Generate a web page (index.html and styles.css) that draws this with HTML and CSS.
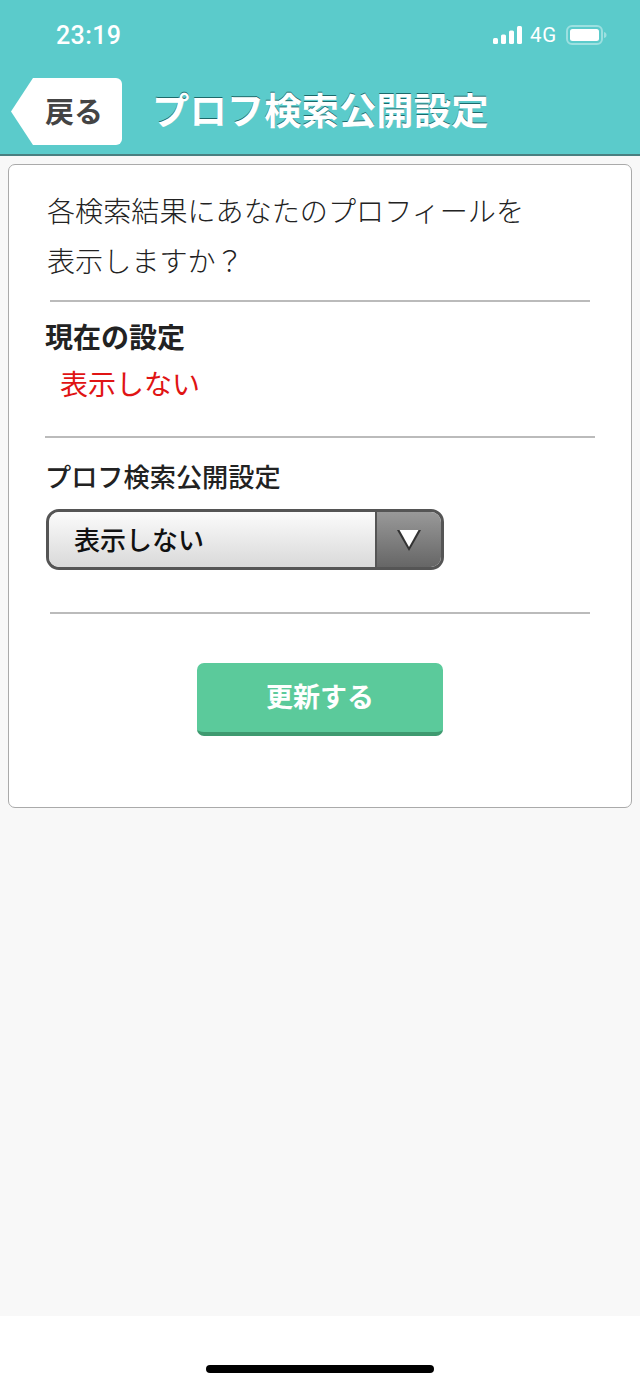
FILE: index.html
```html
<!DOCTYPE html>
<html lang="ja">

<head>
    <meta charset="UTF-8" />
    <meta name="viewport" content="width=device-width, initial-scale=1.0" />
    <title>プロフ検索公開設定</title>

    <link rel="stylesheet" href="styles.css">
</head>

<body>
    <div class="container">
        <div class="top">
            <div class="status-bar">
                <span class="time">23:19</span>
                <div class="status-icons">
                    <svg class="signal" width="29" height="18" viewBox="0 0 29 18">
                        <rect x="0" y="12" width="5" height="6" rx="1.5" />
                        <rect x="8" y="8.5" width="5" height="9.5" rx="1.5" />
                        <rect x="16" y="4.5" width="5" height="13.5" rx="1.5" />
                        <rect x="24" y="0" width="5" height="18" rx="1.5" />
                    </svg>
                    <span class="network">4G</span>
                    <svg class="battery" width="41" height="20" viewBox="0 0 41 20">
                        <rect x="1" y="1" width="35" height="18" rx="5" fill="none" stroke="#fff" stroke-opacity="0.4" stroke-width="2" />
                        <rect x="4" y="4" width="29" height="12" rx="2.5" fill="#fff" />
                        <path d="M38 7 C40 7.5 40.5 8.5 40.5 10 C40.5 11.5 40 12.500 38 13 Z" fill="#fff" fill-opacity="0.4" />
                    </svg>
                </div>
            </div>
            <header>
                <a class="button-back" href="">戻る</a>
                <h1>プロフ検索公開設定</h1>
            </header>
        </div>

        <main>
            <div class="card">
                <p class="intro">各検索結果にあなたのプロフィールを<br>表示しますか？</p>
                <hr class="line line-first">
                <h2 class="current-title">現在の設定</h2>
                <p class="current-value">表示しない</p>
                <hr class="line line-wide">
                <label class="select-label" for="visible">プロフ検索公開設定</label>
                <div class="select-box" id="visible">
                    <span class="select-text">表示しない</span>
                    <span class="select-arrow">
                        <svg width="26" height="24" viewBox="0 0 26 24">
                            <path d="M1 2 H25 L13 23 Z" fill="#333" />
                            <path d="M3.500 2 H22.500 L13 19 Z" fill="#fff" />
                        </svg>
                    </span>
                </div>
                <hr class="line line-last">
                <div class="button-wrapper">
                    <button class="button-update" type="button">更新する</button>
                </div>
            </div>
        </main>

        <footer>
            <div class="home-bar"></div>
        </footer>
    </div>
</body>

</html>
```

FILE: styles.css
```css
:root {
    --bg-top: #5bcbcb;
    --bg-page: #f8f8f8;
    --line: #bbbbbb;
    --text: #222222;
    --green: #5bca9b;
    --green-dark: #3f9a70;
}

body {
    margin: 0;
    font-family: "Noto Sans CJK JP", "Noto Sans", sans-serif;
    color: var(--text);
    background-color: #ffffff;
}

.container {
    display: flex;
    flex-direction: column;
    height: 1385px;
}

.top {
    background-color: var(--bg-top);
    border-bottom: 2px solid #4a7f80;
}

.status-bar {
    display: flex;
    justify-content: space-between;
    align-items: center;
    height: 70px;
    padding: 0 33px 0 56px;
    color: #ffffff;
}

.time {
    font-family: Roboto, sans-serif;
    font-size: 25px;
    font-weight: 500;
    letter-spacing: 0.4px;
}

.status-icons {
    display: flex;
    align-items: center;
    gap: 9px;
}

.signal {
    fill: #ffffff;
}

.network {
    font-family: Roboto, sans-serif;
    font-size: 20.500px;
    letter-spacing: 0.8px;
    margin-left: -1px;
}

header {
    display: flex;
    align-items: flex-start;
    height: 84px;
    padding-top: 8px;
    padding-left: 11px;
    box-sizing: border-box;

    h1 {
        margin: 0 0 0 30px;
        color: #ffffff;
        font-size: 37.4px;
        font-weight: 700;
        line-height: 63px;
        white-space: nowrap;
        text-shadow: 0 -1px 0 #1d6a6b;
    }
}

.button-back {
    display: block;
    width: 111px;
    height: 67px;
    line-height: 65px;
    padding-left: 34px;
    box-sizing: border-box;
    background-color: #ffffff;
    color: #444444;
    font-size: 29px;
    font-weight: 700;
    text-decoration: none;
    border-radius: 0 6px 6px 0;
    clip-path: polygon(22px 0, 100% 0, 100% 100%, 22px 100%, 0 50%);
}

main {
    flex: 1;
    background-color: var(--bg-page);
    padding: 8px 8px 0;
}

.card {
    height: 644px;
    box-sizing: border-box;
    background-color: #ffffff;
    border: 1px solid #aaaaaa;
    border-radius: 7px;
    padding: 20px 36px 0;
}

.intro {
    margin: 0 0 0 2px;
    font-size: 28.1px;
    font-weight: 300;
    line-height: 50px;
    color: #222222;
}

.line {
    border: none;
    border-top: 2px solid var(--line);
    margin: 0;
}

.line-first {
    margin: 15px 5px 0;
}

.current-title {
    margin: 16px 0 0;
    font-size: 28px;
    font-weight: 700;
    line-height: 36px;
}

.current-value {
    margin: 11px 0 0 15px;
    font-size: 28px;
    line-height: 36px;
    color: #e01414;
}

.line-wide {
    margin: 35px 0 0;
}

.select-label {
    display: block;
    margin: 20px 0 0;
    font-size: 26.2px;
    font-weight: 500;
    line-height: 36px;
}

.select-box {
    display: flex;
    width: 398px;
    height: 61px;
    margin: 15px 0 0 1px;
    box-sizing: border-box;
    border: 3px solid #555555;
    border-radius: 13px;
    overflow: hidden;
}

.select-text {
    flex: 1;
    padding-left: 25px;
    background: linear-gradient(#fbfbfb, #d9d9d9);
    font-size: 26px;
    font-weight: 500;
    line-height: 53px;
    color: #111111;
}

.select-arrow {
    display: flex;
    align-items: center;
    justify-content: center;
    width: 66px;
    background: linear-gradient(#999999, #666666);
    border-left: 2px solid #555555;
    box-sizing: border-box;
}

.line-last {
    margin: 42px 5px 0;
}

.button-wrapper {
    display: flex;
    justify-content: center;
    margin-top: 49px;
}

.button-update {
    width: 246px;
    height: 73px;
    padding: 0 0 4px;
    background-color: var(--green);
    border: none;
    border-bottom: 4px solid var(--green-dark);
    border-radius: 7px;
    color: #ffffff;
    font-family: inherit;
    font-size: 27px;
    font-weight: 700;
}

footer {
    display: flex;
    justify-content: center;
    height: 69px;
    background-color: #ffffff;
}

.home-bar {
    width: 228px;
    height: 8px;
    margin-top: 49px;
    background-color: #000000;
    border-radius: 4px;
}
```
